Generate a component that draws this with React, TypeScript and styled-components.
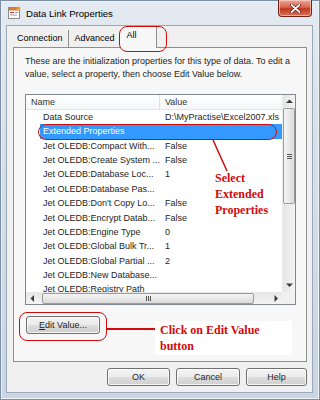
import React from 'react';
import styled, { createGlobalStyle } from 'styled-components';

const GlobalStyle = createGlobalStyle`
    html, body {
        margin: 0;
        padding: 0;
        background: #ffffff;
    }
    * {
        box-sizing: border-box;
    }
`

const red = '#d10a0a';
const uiFont = `"Liberation Sans", Arial, sans-serif`;
const noteFont = `"Liberation Serif", "Times New Roman", serif`;

const Window = styled.div`
    width: 320px;
    height: 400px;
    display: flex;
    flex-direction: column;
    background: linear-gradient(180deg, #e4eaf1 0%, #d6dfe9 40%, #c9d5e2 100%);
    box-shadow: inset 0 0 0 1px #7a8ea5, inset 0 0 0 2px #eef3f8;
    font-family: ${uiFont};
    font-size: 9px;
    color: #000;
`

const TitleBar = styled.div`
    height: 27px;
    display: flex;
    align-items: center;
    padding-left: 8px;
    gap: 5px;
`

const Title = styled.span`
    font-size: 9.6px;
    flex: 1;
    padding-top: 1px;
`

const CloseButton = styled.div`
    align-self: flex-start;
    width: 34px;
    height: 17px;
    margin-right: 8px;
    display: flex;
    align-items: center;
    justify-content: center;
    border: 1px solid #6e2218;
    border-top: none;
    border-radius: 0 0 4px 4px;
    background: linear-gradient(180deg, #e9a898 0%, #d9664f 45%, #c0371f 55%, #d8735a 100%);
    box-shadow: inset 0 0 0 1px rgba(255, 220, 210, 0.6);
`

const Client = styled.div`
    flex: 1;
    margin: 0 7px 7px 6px;
    background: #f0f0f0;
    border: 1px solid #97a8bb;
    display: flex;
    flex-direction: column;
    padding: 0 5px 6px 6px;
`

const TabRow = styled.div`
    display: flex;
    align-items: flex-end;
    height: 21px;
    padding-left: 2px;
`

const Tab = styled.div<{ $active?: boolean; $sep?: boolean; $pad: string }>`
    position: relative;
    height: ${p => (p.$active ? '21px' : '17px')};
    padding: ${p => p.$pad};
    margin-bottom: ${p => (p.$active ? '-1px' : '0')};
    background: ${p => (p.$active ? '#f7f7f7' : 'transparent')};
    border-right: 1px solid ${p => (p.$sep || p.$active ? '#8e8f8f' : 'transparent')};
    z-index: ${p => (p.$active ? 2 : 1)};
    white-space: nowrap;
`

const TabRing = styled.div`
    position: absolute;
    left: -1px;
    right: -11px;
    top: -1px;
    bottom: -4px;
    border: 1.5px solid ${red};
    border-radius: 8px;
    pointer-events: none;
`

const Panel = styled.div`
    position: relative;
    height: 315px;
    border: 1px solid #8e8f8f;
    background: #f7f7f7;
    padding: 7px 10px 0 11px;
    display: flex;
    flex-direction: column;
`

const Description = styled.p`
    margin: 0;
    line-height: 13px;
    color: #1e1e1e;
    white-space: nowrap;
`

const ListView = styled.div`
    position: relative;
    margin-top: 13px;
    width: 271px;
    height: 211px;
    border: 1px solid #828790;
    background: #fff;
    display: grid;
    grid-template-columns: 256px 13px;
    grid-template-rows: 197px 12px;
    overflow: hidden;
`

const ListBody = styled.div`
    overflow: hidden;
`

const HeaderRow = styled.div`
    display: flex;
    height: 15px;
    border-bottom: 1px solid #e5e5e5;
    background: linear-gradient(180deg, #ffffff 0%, #f6f7f8 100%);
`

const HeaderCell = styled.div<{ $w?: number }>`
    width: ${p => (p.$w ? `${p.$w}px` : 'auto')};
    flex: ${p => (p.$w ? 'none' : 1)};
    padding: 2px 0 0 5px;
    border-right: ${p => (p.$w ? '1px solid #e0e0e0' : 'none')};
    color: #333;
`

const Row = styled.div<{ $selected?: boolean }>`
    position: relative;
    display: flex;
    height: 14.36px;
    line-height: 14.36px;
    padding-left: 14px;
    color: ${p => (p.$selected ? '#fff' : '#1e1e1e')};
`

const Cells = styled.div<{ $selected?: boolean }>`
    display: flex;
    flex: 1;
    background: ${p => (p.$selected ? '#3399ff' : 'transparent')};
`

const NameCell = styled.div`
    width: 120px;
    padding-left: 3px;
    white-space: nowrap;
    overflow: hidden;
`

const ValueCell = styled.div`
    flex: 1;
    padding-left: 5px;
    white-space: nowrap;
    overflow: hidden;
`

const RowRing = styled.div`
    position: absolute;
    left: 12px;
    right: 5px;
    top: 0;
    bottom: -1px;
    border: 1.5px solid ${red};
    border-radius: 8px;
`

const VScroll = styled.div`
    display: flex;
    flex-direction: column;
    background: linear-gradient(90deg, #e6e6e6, #f3f3f3);
    border-left: 1px solid #ececec;
`

const HScroll = styled.div`
    display: flex;
    align-items: center;
    background: linear-gradient(180deg, #e6e6e6, #f3f3f3);
`

const Corner = styled.div`
    background: #f0f0f0;
`

const ArrowBox = styled.div<{ $size: number }>`
    width: ${p => p.$size}px;
    height: ${p => p.$size}px;
    flex: none;
    display: flex;
    align-items: center;
    justify-content: center;
`

const Thumb = styled.div<{ $vertical?: boolean }>`
    display: flex;
    align-items: center;
    justify-content: center;
    border: 1px solid #9c9c9c;
    border-radius: 2px;
    background: ${p =>
        p.$vertical
            ? 'linear-gradient(90deg, #f4f4f4, #dcdcdc)'
            : 'linear-gradient(180deg, #f4f4f4, #dcdcdc)'};
`

const Spacer = styled.div`
    flex: 1;
`

const Grip = styled.div<{ $vertical?: boolean }>`
    width: 5px;
    height: 5px;
    background: ${p =>
        p.$vertical
            ? 'repeating-linear-gradient(180deg, #555 0 1px, transparent 1px 2px)'
            : 'repeating-linear-gradient(90deg, #555 0 1px, transparent 1px 2px)'};
`

const SelectNote = styled.div`
    position: absolute;
    left: 189px;
    top: 75px;
    font-family: ${noteFont};
    font-weight: bold;
    font-size: 12px;
    line-height: 16px;
    color: ${red};
    pointer-events: none;
`

const Pointer = styled.svg`
    position: absolute;
    left: 184px;
    top: 43px;
    pointer-events: none;
`

const EditRow = styled.div`
    display: flex;
    align-items: flex-start;
    margin-top: 11px;
    padding-left: 1px;
`

const ButtonWrap = styled.div`
    position: relative;
`

const ButtonRing = styled.div`
    position: absolute;
    left: -7px;
    right: -7px;
    top: -4px;
    bottom: -7px;
    border: 1.5px solid ${red};
    border-radius: 8px;
    pointer-events: none;
`

const Button = styled.button<{ $w: number }>`
    width: ${p => p.$w}px;
    height: 18px;
    padding: 0;
    font-family: ${uiFont};
    font-size: 9px;
    color: #1e1e1e;
    border: 1px solid #707070;
    border-radius: 3px;
    background: linear-gradient(180deg, #f4f4f4 0%, #ebebeb 48%, #dddddd 52%, #cfcfcf 100%);
    box-shadow: inset 0 0 0 1px rgba(255, 255, 255, 0.8);
    u {
        text-decoration: underline;
    }
`

const Connector = styled.div`
    width: 48px;
    height: 2px;
    margin: 12px 0 0 7px;
    background: ${red};
`

const Callout = styled.div`
    width: 137px;
    height: 34px;
    margin-top: 5px;
    padding: 1px 0 0 5px;
    background: #fff;
    font-family: ${noteFont};
    font-weight: bold;
    font-size: 12px;
    line-height: 16px;
    color: ${red};
`

const ButtonBar = styled.div`
    display: flex;
    justify-content: flex-end;
    gap: 6px;
    margin-top: 6px;
`

const TitleIcon = () => (
    <svg width="13" height="13" viewBox="0 0 13 13">
        <rect x="0.5" y="1.5" width="11" height="11" fill="#fdfdfd" stroke="#8a8a8a" />
        <rect x="1" y="2" width="10" height="2.5" fill="#d9793a" />
        <rect x="2" y="6" width="4" height="1" fill="#c0392b" />
        <rect x="2" y="8.5" width="7" height="1" fill="#9a9a9a" />
        <rect x="7" y="6" width="3" height="1" fill="#9a9a9a" />
        <circle cx="10.5" cy="2.5" r="2" fill="#e8a33d" />
    </svg>
)

const CloseX = () => (
    <svg width="11" height="9" viewBox="0 0 11 9">
        <path d="M1.5 1 L9.5 8 M9.5 1 L1.5 8" stroke="#5a1208" strokeWidth="3" strokeLinecap="round" />
        <path d="M1.5 1 L9.5 8 M9.5 1 L1.5 8" stroke="#ffffff" strokeWidth="1.7" strokeLinecap="round" />
    </svg>
)

const Arrow = ({ dir }: { dir: 'up' | 'down' | 'left' | 'right' }) => {
    const pts = {
        up: '0,4 3.5,0.5 7,4',
        down: '0,0.5 3.5,4 7,0.5',
        left: '4,0 0.5,3.5 4,7',
        right: '0.5,0 4,3.5 0.5,7',
    }[dir];
    const vertical = dir === 'up' || dir === 'down';
    return (
        <svg width={vertical ? 7 : 5} height={vertical ? 5 : 7} viewBox={vertical ? '0 0 7 5' : '0 0 5 7'}>
            <polygon points={pts} fill="#3c3c3c" />
        </svg>
    )
}

type Prop = { name: string; value: string; selected?: boolean };

const props: Prop[] = [
    { name: 'Data Source', value: 'D:\\MyPractise\\Excel2007.xls' },
    { name: 'Extended Properties', value: '', selected: true },
    { name: 'Jet OLEDB:Compact With...', value: 'False' },
    { name: 'Jet OLEDB:Create System ...', value: 'False' },
    { name: 'Jet OLEDB:Database Loc...', value: '1' },
    { name: 'Jet OLEDB:Database Pas...', value: '' },
    { name: "Jet OLEDB:Don't Copy Lo...", value: 'False' },
    { name: 'Jet OLEDB:Encrypt Datab...', value: 'False' },
    { name: 'Jet OLEDB:Engine Type', value: '0' },
    { name: 'Jet OLEDB:Global Bulk Tr...', value: '1' },
    { name: 'Jet OLEDB:Global Partial ...', value: '2' },
    { name: 'Jet OLEDB:New Database...', value: '' },
    { name: 'Jet OLEDB:Registry Path', value: '' },
];

const App = () => {
    return (
        <>
            <GlobalStyle />
            <Window>
                <TitleBar>
                    <TitleIcon />
                    <Title>Data Link Properties</Title>
                    <CloseButton>
                        <CloseX />
                    </CloseButton>
                </TitleBar>

                <Client>
                    <TabRow>
                        <Tab $sep $pad="3px 5px 0 2px">Connection</Tab>
                        <Tab $pad="3px 4px 0 6px">Advanced</Tab>
                        <Tab $active $pad="3px 19px 0 7px">
                            All
                            <TabRing />
                        </Tab>
                    </TabRow>

                    <Panel>
                        <Description>
                            These are the initialization properties for this type of data. To edit a
                            <br />
                            value, select a property, then choose Edit Value below.
                        </Description>

                        <ListView>
                            <ListBody>
                                <HeaderRow>
                                    <HeaderCell $w={134}>Name</HeaderCell>
                                    <HeaderCell>Value</HeaderCell>
                                </HeaderRow>
                                {props.map(p => (
                                    <Row key={p.name} $selected={p.selected}>
                                        <Cells $selected={p.selected}>
                                            <NameCell>{p.name}</NameCell>
                                            <ValueCell>{p.value}</ValueCell>
                                        </Cells>
                                        {p.selected && <RowRing />}
                                    </Row>
                                ))}
                            </ListBody>

                            <VScroll>
                                <ArrowBox $size={13}><Arrow dir="up" /></ArrowBox>
                                <Thumb $vertical style={{ height: 96 }}>
                                    <Grip $vertical />
                                </Thumb>
                                <Spacer />
                                <ArrowBox $size={13}><Arrow dir="down" /></ArrowBox>
                            </VScroll>

                            <HScroll>
                                <ArrowBox $size={12}><Arrow dir="left" /></ArrowBox>
                                <Thumb style={{ width: 212, height: 11, marginLeft: 4 }}>
                                    <Grip />
                                </Thumb>
                                <Spacer />
                                <ArrowBox $size={12}><Arrow dir="right" /></ArrowBox>
                            </HScroll>
                            <Corner />

                            <Pointer width="20" height="36" viewBox="0 0 20 36">
                                <line x1="3" y1="2" x2="17" y2="33" stroke={red} strokeWidth="1.5" />
                            </Pointer>
                            <SelectNote>
                                Select
                                <br />
                                Extended
                                <br />
                                Properties
                            </SelectNote>
                        </ListView>

                        <EditRow>
                            <ButtonWrap>
                                <Button $w={74}><u>E</u>dit Value...</Button>
                                <ButtonRing />
                            </ButtonWrap>
                            <Connector />
                            <Callout>
                                Click on Edit Value
                                <br />
                                button
                            </Callout>
                        </EditRow>
                    </Panel>

                    <ButtonBar>
                        <Button $w={63}>OK</Button>
                        <Button $w={64}>Cancel</Button>
                        <Button $w={61}>Help</Button>
                    </ButtonBar>
                </Client>
            </Window>
        </>
    )
}

export default App;
